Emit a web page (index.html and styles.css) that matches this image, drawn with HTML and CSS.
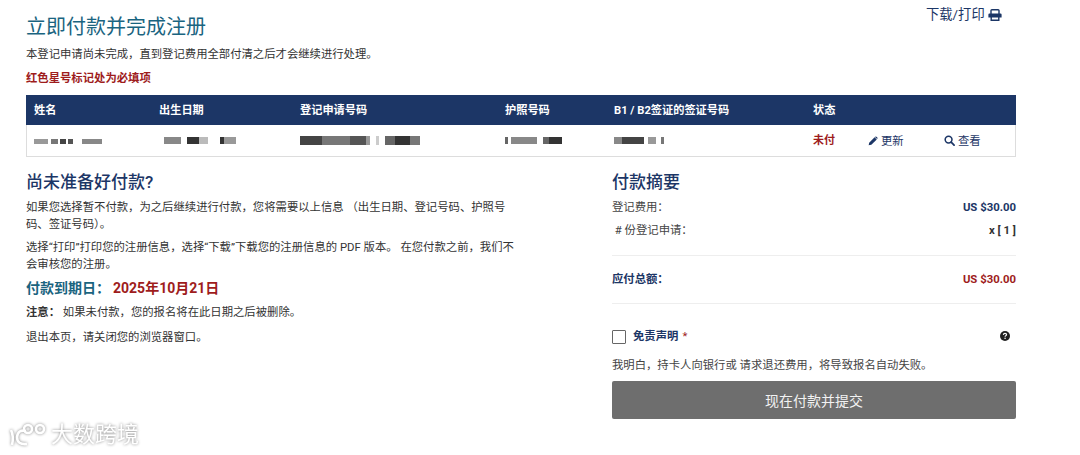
FILE: index.html
```html
<!DOCTYPE html>
<html lang="zh-CN">
<head>
  <meta charset="UTF-8" />
  <title>立即付款并完成注册</title>
  <link rel="stylesheet" href="styles.css">
</head>
<body>
  <div class="page">
    <a class="print-link" href="#">下载/打印
      <svg class="icon-print" viewBox="0 0 14 12" width="14" height="12">
        <path d="M3 5V1.6Q3 .7 3.9 .7H10.1Q11 .7 11 1.6V5" fill="none" stroke="#1c3666" stroke-width="1.4"/>
        <path d="M1.5 4.4H12.5Q13.6 4.4 13.6 5.5V8.4H11V7.2H3V8.4H.4V5.5Q.4 4.4 1.5 4.4Z" fill="#1c3666"/>
        <path d="M3.2 7.8H10.8V11.2H3.2Z" fill="none" stroke="#1c3666" stroke-width="1.4"/>
      </svg>
    </a>
    <h1>立即付款并完成注册</h1>
    <p class="intro">本登记申请尚未完成，直到登记费用全部付清之后才会继续进行处理。</p>
    <p class="required">红色星号标记处为必填项</p>

    <div class="reg-table">
      <div class="reg-row reg-head">
        <div>姓名</div>
        <div>出生日期</div>
        <div>登记申请号码</div>
        <div>护照号码</div>
        <div>B1 / B2签证的签证号码</div>
        <div>状态</div>
        <div></div>
        <div></div>
      </div>
      <div class="reg-row reg-body">
        <div><span class="redact r-name"></span></div>
        <div><span class="redact r-dob"></span></div>
        <div><span class="redact r-num"></span></div>
        <div><span class="redact r-pass"></span></div>
        <div><span class="redact r-visa"></span></div>
        <div class="unpaid">未付</div>
        <div class="action">
          <svg viewBox="0 0 12 12" width="10" height="10"><path d="M.8 11.2L1.4 8 7.9 1.5 10.5 4.1 4 10.6Z M8.7 .8Q9.4 .2 10.1 .8L11.2 1.9Q11.8 2.6 11.2 3.3L10.9 3.6 8.4 1.1Z" fill="#1c3666"/></svg>
          更新
        </div>
        <div class="action">
          <svg viewBox="0 0 12 12" width="11" height="11"><circle cx="5" cy="5" r="3.7" fill="none" stroke="#1c3666" stroke-width="1.7"/><path d="M7.8 7.8L11 11" stroke="#1c3666" stroke-width="1.9" stroke-linecap="round"/></svg>
          查看
        </div>
      </div>
    </div>

    <div class="columns">
      <section class="col-left">
        <h2>尚未准备好付款?</h2>
        <p class="line-a">如果您选择暂不付款，为之后继续进行付款，您将需要以上信息 （出生日期、登记号码、护照号码、签证号码）。</p>
        <p class="line-b">选择“打印”打印您的注册信息，选择“下载”下载您的注册信息的 PDF 版本。 在您付款之前，我们不会审核您的注册。</p>
        <h3><span class="due-label">付款到期日：</span><span class="due-date">2025年10月21日</span></h3>
        <p class="note"><b>注意：</b> 如果未付款，您的报名将在此日期之后被删除。</p>
        <p class="note exit">退出本页，请关闭您的浏览器窗口。</p>
      </section>

      <section class="col-right">
        <h2>付款摘要</h2>
        <div class="sum-row"><span>登记费用：</span><b>US $30.00</b></div>
        <div class="sum-row sum-count"><span>&nbsp;# 份登记申请：</span><b>x [ 1 ]</b></div>
        <div class="sum-row sum-total"><b>应付总额：</b><b class="due-date">US $30.00</b></div>
        <div class="disclaimer">
          <span class="checkbox"></span>
          <b>免责声明</b><span class="star">*</span>
          <svg class="icon-help" viewBox="0 0 12 12" width="10" height="10"><circle cx="6" cy="6" r="6" fill="#222"/><path d="M4 4.6Q4.2 2.8 6 2.8 7.9 2.8 7.9 4.3 7.9 5.2 6.9 5.7 6.1 6.1 6.1 7" fill="none" stroke="#fff" stroke-width="1.4"/><rect x="5.3" y="8" width="1.6" height="1.5" fill="#fff"/></svg>
        </div>
        <p class="agree">我明白，持卡人向银行或 请求退还费用，将导致报名自动失败。</p>
        <button class="submit">现在付款并提交</button>
      </section>
    </div>
  </div>

  <div class="watermark">
    <svg viewBox="0 0 40 26" width="40" height="26">
      <g fill="none" stroke="#fff" stroke-width="2.6">
        <path d="M3 8Q6 14 4 23"/>
        <path d="M18 9Q10 7 9 15 9 23 19 22"/>
        <circle cx="20" cy="7" r="4"/>
        <circle cx="32" cy="7" r="4"/>
      </g>
    </svg>
    <span>大数跨境</span>
  </div>
</body>
</html>
```

FILE: styles.css
```css
* {
    box-sizing: border-box;
    margin: 0;
    padding: 0;
}
body {
    font-family: Roboto, 'Noto Sans CJK SC', sans-serif;
    font-size: 11.35px;
    line-height: 16px;
    color: #333;
    background: #fff;
    overflow: hidden;
}

.page {
    position: relative;
    width: 990px;
    margin-left: 26px;
    padding-top: 14px;
}

.print-link {
    position: absolute;
    top: 7px;
    left: 900px;
    display: flex;
    align-items: center;
    gap: 3px;
    font-size: 13.3px;
    color: #1c3666;
    text-decoration: none;
}

h1 {
    font-size: 20px;
    line-height: 26px;
    font-weight: 400;
    color: #1a6480;
}

.intro {
    margin-top: 6px;
}

.required {
    margin-top: 8px;
    font-weight: 700;
    color: #9e1c1c;
}

.reg-table {
    margin-top: 9px;
    border: 1px solid #ddd;
    border-top: none;
}

.reg-row {
    display: grid;
    grid-template-columns: 125px 141px 205px 109px 199px 55px 76px 1fr;
    align-items: center;
    padding-left: 7px;
}

.reg-head {
    height: 30px;
    margin: 0 -1px;
    padding: 1px 0 0 8px;
    background: #1c3666;
    color: #fff;
    font-size: 11.2px;
    font-weight: 700;
}

.reg-body {
    height: 31px;
}

.unpaid {
    color: #9e1c1c;
    font-weight: 700;
    font-size: 11px;
}

.action {
    display: flex;
    align-items: center;
    gap: 3px;
    color: #1c3666;
}

.redact {
    display: block;
    height: 9px;
    filter: blur(0.7px);
    background-repeat: no-repeat;
}

.r-name {
    width: 68px;
    background-image: linear-gradient(90deg, #999 0 14px, #fff 14px 17px, #777 17px 24px, #fff 24px 26px, #444 26px 32px, #fff 32px 34px, #555 34px 39px, #fff 39px 48px, #888 48px 68px);
    background-size: 68px 5px;
    background-position: 0 3px;
}

.r-dob {
    width: 72px;
    margin-left: 5px;
    background-image: linear-gradient(90deg, #888 0 17px, #fff 17px 23px, #333 23px 35px, #bbb 35px 44px, #fff 44px 56px, #333 56px 60px, #999 60px 64px);
    background-size: 72px 7px;
    background-position: 0 1px;
}

.r-num {
    width: 120px;
    background-image: linear-gradient(90deg, #444 0 22px, #777 22px 50px, #555 50px 66px, #999 66px 70px, #fff 70px 76px, #ccc 76px 79px, #fff 79px 85px, #666 85px 95px, #333 95px 110px, #777 110px 118px);
}

.r-pass {
    width: 57px;
    background-image: linear-gradient(90deg, #666 0 3px, #fff 3px 6px, #888 6px 32px, #fff 32px 38px, #666 38px 44px, #333 44px 57px);
    background-size: 57px 7px;
    background-position: 0 1px;
}

.r-visa {
    width: 50px;
    background-image: linear-gradient(90deg, #888 0 8px, #444 8px 30px, #fff 30px 34px, #999 34px 42px, #fff 42px 47px, #777 47px 50px);
    background-size: 50px 7px;
    background-position: 0 1px;
}

.columns {
    display: flex;
    margin-top: 13px;
}

.col-left {
    width: 489.5px;
    margin-right: 96.5px;
    line-height: 17px;
}

.col-right {
    flex: 1;
    color: #444;
}

h2 {
    font-size: 17px;
    line-height: 24px;
    font-weight: 500;
    color: #1c3666;
}

.line-a {
    margin-top: 5px;
}

.line-b {
    margin-top: 6px;
}

h3 {
    margin-top: 5px;
    font-size: 14px;
    line-height: 20px;
    font-weight: 700;
}

.due-label {
    color: #1a6480;
    margin-right: 3px;
}

.due-date {
    color: #9e1c1c;
}

.note {
    margin-top: 6px;
}

.note.exit {
    margin-top: 8px;
}

.sum-row {
    display: flex;
    justify-content: space-between;
    margin-top: 5px;
    color: #1c3666;
}

.sum-row span {
    color: #444;
}

.sum-count {
    margin-top: 7px;
    padding-bottom: 17px;
    border-bottom: 1px solid #eee;
}

.sum-count b {
    color: #333;
}

.sum-total {
    padding: 15px 0 16px;
    margin-top: 0;
    border-bottom: 1px solid #eee;
}

.disclaimer {
    display: flex;
    align-items: center;
    margin-top: 24px;
    color: #1c3666;
}

.checkbox {
    width: 14px;
    height: 14px;
    margin: 2px 7px 0 0;
    border: 1px solid #666;
    border-radius: 1px;
}

.star {
    margin-left: 4px;
    color: #9e1c1c;
}

.icon-help {
    margin-left: auto;
    margin-right: 6px;
}

.agree {
    margin-top: 13px;
}

.submit {
    display: block;
    width: 100%;
    height: 38px;
    margin-top: 8px;
    border: none;
    border-radius: 2px;
    background: #6e6e6e;
    color: #f2f2f2;
    font-family: inherit;
    font-size: 14px;
}

.watermark {
    position: absolute;
    left: 8px;
    top: 422px;
    display: flex;
    align-items: center;
    gap: 3px;
    font-size: 22px;
    line-height: 26px;
    color: #fff;
    filter: drop-shadow(0 0 1.5px #888);
}
```
